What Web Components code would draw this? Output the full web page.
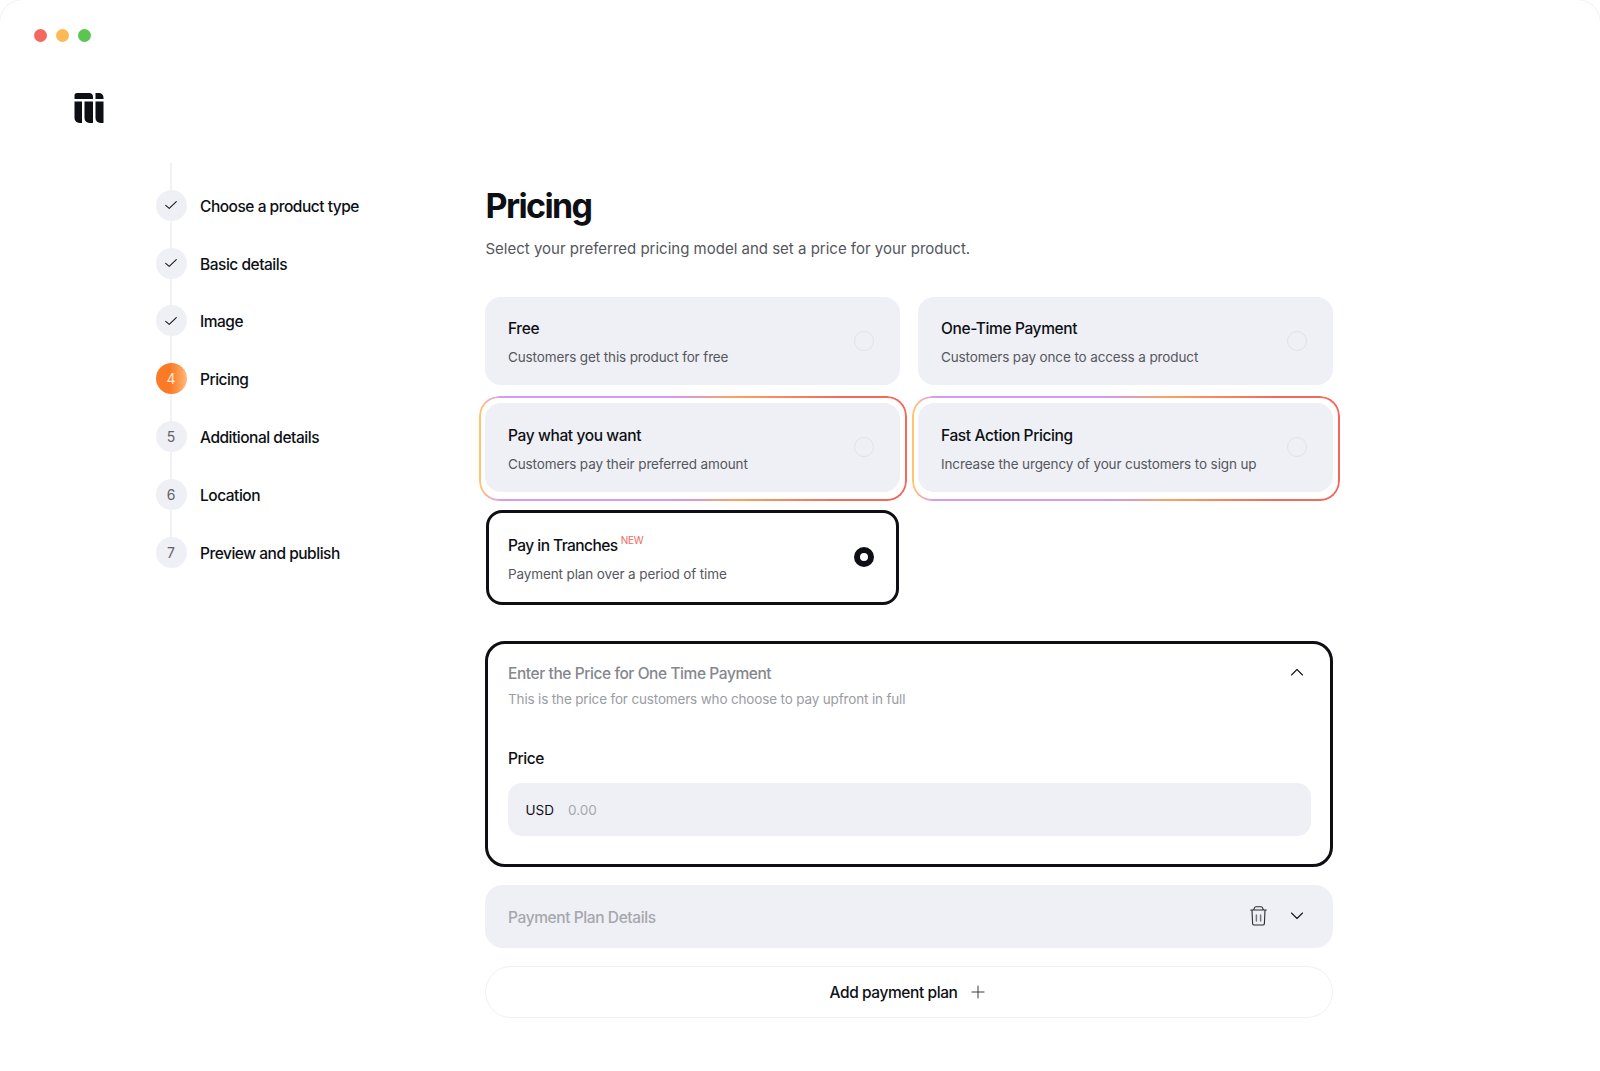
<!DOCTYPE html>
<html lang="en">
<head>
<meta charset="utf-8">
<title>Pricing</title>
<style>
  html, body { margin: 0; height: 100%; background: #fff; overflow: hidden; }
  body { font-family: Inter, "Noto Sans", sans-serif; color: #0d0f14; }
</style>
</head>
<body>
<app-window>
  <step-rail slot="rail">
    <step-item state="done" label="Choose a product type"></step-item>
    <step-item state="done" label="Basic details"></step-item>
    <step-item state="done" label="Image"></step-item>
    <step-item state="current" num="4" label="Pricing"></step-item>
    <step-item num="5" label="Additional details"></step-item>
    <step-item num="6" label="Location"></step-item>
    <step-item num="7" label="Preview and publish"></step-item>
  </step-rail>

  <pricing-page slot="main">
    <option-grid>
      <option-card title="Free" desc="Customers get this product for free"></option-card>
      <option-card title="One-Time Payment" desc="Customers pay once to access a product"></option-card>
      <option-card highlight title="Pay what you want" desc="Customers pay their preferred amount"></option-card>
      <option-card highlight title="Fast Action Pricing" desc="Increase the urgency of your customers to sign up"></option-card>
      <option-card selected badge="NEW" title="Pay in Tranches" desc="Payment plan over a period of time"></option-card>
    </option-grid>
    <price-panel></price-panel>
    <plan-row></plan-row>
    <add-plan></add-plan>
  </pricing-page>
</app-window>

<script>
// Window chrome: traffic lights, logo, and the two page columns
class AppWindow extends HTMLElement {
  constructor() {
    super();
    this.attachShadow({ mode: 'open' });
    this.shadowRoot.innerHTML = `
      <style>
        /* the straight edges of the frame sit just off the canvas, only the rounded corners show */
        :host { display: block; height: 1120px; box-sizing: border-box; margin: -1px -1px 0; border: 1px solid #f2f2f4; border-radius: 24px; padding: 28.5px 0 0 33.5px; }
        .lights { display: flex; gap: 9.2px; }
        .lights i { width: 13px; height: 13px; border-radius: 50%; }
        .logo { display: block; margin: 51.2px 0 0 40.5px; }
        .cols { display: flex; margin: 40.3px 0 0 122px; }
        .rail { width: 329.5px; flex: none; }
        .main { width: 848px; flex: none; }
      </style>
      <div class="lights">
        <i style="background:#f4695f"></i><i style="background:#fdb953"></i><i style="background:#5cc451"></i>
      </div>
      <svg class="logo" width="30" height="30" viewBox="0 0 30 30" fill="#0d0f14">
        <path d="M3 0H15A4 4 0 0 1 19 4V6H.5V2.5A2.5 2.5 0 0 1 3 0Z"/>
        <path d="M21.5 0H25A4.5 4.5 0 0 1 29.5 4.5V6H21.5Z"/>
        <path d="M.5 8.5H8V30H5.5A5 5 0 0 1 .5 25Z"/>
        <path d="M10.5 8.5H19V30H15.5A5 5 0 0 1 10.5 25Z"/>
        <path d="M21.5 8.5H29.5V30H26.5A5 5 0 0 1 21.5 25Z"/>
      </svg>
      <div class="cols">
        <div class="rail"><slot name="rail"></slot></div>
        <div class="main"><slot name="main"></slot></div>
      </div>
    `;
  }
}

// Vertical list of steps with the line running behind the circles
class StepRail extends HTMLElement {
  constructor() {
    super();
    this.attachShadow({ mode: 'open' });
    this.shadowRoot.innerHTML = `
      <style>
        :host { display: flex; flex-direction: column; gap: 26.8px; position: relative; padding-top: 26.8px; }
        .line { position: absolute; left: 14.5px; top: 0; bottom: 16px; width: 2px; background: #f1f2f6; }
      </style>
      <div class="line"></div>
      <slot></slot>
    `;
  }
}

// One step: circle with a check or number, then the label
class StepItem extends HTMLElement {
  constructor() {
    super();
    this.attachShadow({ mode: 'open' });
  }

  connectedCallback() {
    const state = this.getAttribute('state');
    const mark = state === 'done'
      ? `<svg width="14" height="14" viewBox="0 0 14 14" fill="none" stroke="#15171c" stroke-width="1.1" stroke-linecap="round" stroke-linejoin="round"><path d="M1.7 7.4 5.2 10.4 12.3 3.6"/></svg>`
      : this.getAttribute('num');
    this.shadowRoot.innerHTML = `
      <style>
        :host { display: flex; align-items: center; gap: 13.5px; position: relative; height: 31px; }
        .dot { width: 31px; height: 31px; border-radius: 50%; background: #eff0f5; color: #5f6268; font-size: 14px; display: flex; align-items: center; justify-content: center; flex: none; }
        .dot.current { background: linear-gradient(90deg, #fb7a26 0 45%, #fd9a4e 75%, #ffbb82 100%); color: rgba(255,255,255,.85); }
        .label { padding-top: 2px; font-size: 15.5px; font-weight: 500; letter-spacing: -0.48px; color: #0d0f14; }
      </style>
      <span class="dot ${state === 'current' ? 'current' : ''}">${mark}</span>
      <span class="label">${this.getAttribute('label')}</span>
    `;
  }
}

// Heading plus the stack of pricing sections
class PricingPage extends HTMLElement {
  constructor() {
    super();
    this.attachShadow({ mode: 'open' });
    this.shadowRoot.innerHTML = `
      <style>
        :host { display: block; padding-top: 22px; }
        h1 { margin: 0; font-size: 34px; line-height: 42px; font-weight: 700; letter-spacing: -1.6px; color: #0d0f14; padding-left: 0.5px; }
        p { margin: 12px 0 37.7px; padding-left: 0.5px; font-size: 15px; line-height: 20px; color: #54565c; }
      </style>
      <h1>Pricing</h1>
      <p>Select your preferred pricing model and set a price for your product.</p>
      <slot></slot>
    `;
  }
}

class OptionGrid extends HTMLElement {
  constructor() {
    super();
    this.attachShadow({ mode: 'open' });
    this.shadowRoot.innerHTML = `
      <style>
        :host { display: grid; grid-template-columns: 415px 415px; column-gap: 18px; row-gap: 18px; }
      </style>
      <slot></slot>
    `;
  }
}

// A pricing option: title, description, radio. Variants are highlight and selected
class OptionCard extends HTMLElement {
  constructor() {
    super();
    this.attachShadow({ mode: 'open' });
  }

  connectedCallback() {
    const badge = this.getAttribute('badge');
    this.shadowRoot.innerHTML = `
      <style>
        :host { display: flex; align-items: center; justify-content: space-between; position: relative; box-sizing: border-box; height: 88px; padding: 0 26px 0 23px; background: #eff0f5; border-radius: 16px; }
        :host([highlight]) { height: 89px; }
        :host([highlight])::before {
          content: ''; position: absolute; inset: -6.7px -6.5px -9px -6.5px; border: 2px solid transparent; border-radius: 20px;
          background: linear-gradient(90deg, #ffc766 0, #f5b0b5 2.5%, #cf9af8 6%, #cf9af8 45%, #ffa05e 60%, #f4695c 85%, #f4695c 100%) border-box;
          -webkit-mask: linear-gradient(#000 0 0) padding-box, linear-gradient(#000 0 0);
          -webkit-mask-composite: xor; mask-composite: exclude;
        }
        :host([selected]) { height: 95px; width: 413px; margin-left: 0.5px; background: #fff; border: 3px solid #0d0f14; padding: 0 21.5px 0 19.5px; }
        .text { display: flex; flex-direction: column; gap: 8.3px; padding-top: 5px; }
        :host([selected]) .text { padding-top: 5px; }
        .title { font-size: 15.5px; line-height: 20px; font-weight: 500; letter-spacing: -0.38px; color: #0d0f14; }
        :host([selected]) .title { letter-spacing: -0.55px; }
        .badge { font-size: 10px; font-weight: 400; letter-spacing: -0.15px; color: #f4695c; vertical-align: 7px; margin-left: 3px; line-height: 0; }
        .desc { font-size: 13.5px; line-height: 20px; letter-spacing: -0.12px; color: #55575d; }
        .radio { width: 20px; height: 20px; box-sizing: border-box; border-radius: 50%; border: 1px solid #e1e2e7; flex: none; }
        :host([selected]) .radio { border: 6px solid #0d0f14; background: #fff; }
      </style>
      <div class="text">
        <div class="title">${this.getAttribute('title')}${badge ? `<span class="badge">${badge}</span>` : ''}</div>
        <div class="desc">${this.getAttribute('desc')}</div>
      </div>
      <span class="radio"></span>
    `;
  }
}

// Open accordion with the price input
class PricePanel extends HTMLElement {
  constructor() {
    super();
    this.attachShadow({ mode: 'open' });
    this.shadowRoot.innerHTML = `
      <style>
        :host { display: block; box-sizing: border-box; height: 226px; margin-top: 36.3px; border: 3px solid #0d0f14; border-radius: 20px; padding: 18px 19px 0 20px; }
        .head { display: flex; justify-content: space-between; align-items: center; height: 22px; }
        .title { padding-top: 2px; font-size: 15.5px; font-weight: 500; letter-spacing: -0.42px; color: #85878d; }
        svg { margin: 0 7px 2px 0; }
        .sub { margin-top: 5px; font-size: 13.5px; line-height: 20px; letter-spacing: -0.16px; color: #9a9ca2; }
        .label { margin-top: 40px; font-size: 15.5px; line-height: 20px; font-weight: 500; letter-spacing: -0.42px; color: #0d0f14; }
        .input { display: flex; align-items: center; gap: 14px; margin-top: 14px; height: 53px; padding: 2px 17.5px 0; box-sizing: border-box; border-radius: 14px; background: #eff0f5; font-size: 13.5px; }
        .cur { color: #0d0f14; }
        .ph { color: #a6a8ad; }
      </style>
      <div class="head">
        <span class="title">Enter the Price for One Time Payment</span>
        <svg width="14" height="8" viewBox="0 0 14 8" fill="none" stroke="#15171c" stroke-width="1.1" stroke-linecap="round" stroke-linejoin="round"><path d="M1.5 7 7 1.5 12.5 7"/></svg>
      </div>
      <div class="sub">This is the price for customers who choose to pay upfront in full</div>
      <div class="label">Price</div>
      <div class="input"><span class="cur">USD</span><span class="ph">0.00</span></div>
    `;
  }
}

// Collapsed payment plan row with delete and expand icons
class PlanRow extends HTMLElement {
  constructor() {
    super();
    this.attachShadow({ mode: 'open' });
    this.shadowRoot.innerHTML = `
      <style>
        :host { display: flex; align-items: center; box-sizing: border-box; height: 62.7px; margin-top: 18px; padding: 0 29.5px 0 23px; background: #eff0f5; border-radius: 18px; }
        .title { flex: 1; padding-top: 2px; font-size: 15.5px; font-weight: 500; letter-spacing: -0.4px; color: #a5a7ad; }
        .trash { margin-right: 22.5px; }
      </style>
      <span class="title">Payment Plan Details</span>
      <svg class="trash" width="17" height="20" viewBox="0 0 17 20" fill="none" stroke="#2b2d33" stroke-width="1.1" stroke-linecap="round" stroke-linejoin="round">
        <path d="M.7 4H16.3M2 4 2.6 17.6A1.6 1.6 0 0 0 4.2 19H12.8A1.6 1.6 0 0 0 14.4 17.6L15 4M3.6 4 4.4 2A1.6 1.6 0 0 1 5.9 .8H11.1A1.6 1.6 0 0 1 12.6 2L13.4 4"/>
        <path d="M6.4 9V15M10.6 9V15" stroke="#74767c" stroke-width="1.5"/>
      </svg>
      <svg width="14" height="8" viewBox="0 0 14 8" fill="none" stroke="#15171c" stroke-width="1.1" stroke-linecap="round" stroke-linejoin="round"><path d="M1.5 1 7 6.5 12.5 1"/></svg>
    `;
  }
}

class AddPlan extends HTMLElement {
  constructor() {
    super();
    this.attachShadow({ mode: 'open' });
    this.shadowRoot.innerHTML = `
      <style>
        :host { display: flex; align-items: center; justify-content: center; gap: 14px; box-sizing: border-box; height: 52.3px; margin-top: 18px; padding-right: 3px; border: 1px solid #f0f1f6; border-radius: 27px; }
        span { padding-top: 2px; font-size: 15.5px; font-weight: 500; letter-spacing: -0.42px; color: #0d0f14; }
      </style>
      <span>Add payment plan</span>
      <svg width="14" height="14" viewBox="0 0 14 14" fill="none" stroke="#3a3c42" stroke-width="1" stroke-linecap="round"><path d="M7 1V13M1 7H13"/></svg>
    `;
  }
}

customElements.define('app-window', AppWindow);
customElements.define('step-rail', StepRail);
customElements.define('step-item', StepItem);
customElements.define('pricing-page', PricingPage);
customElements.define('option-grid', OptionGrid);
customElements.define('option-card', OptionCard);
customElements.define('price-panel', PricePanel);
customElements.define('plan-row', PlanRow);
customElements.define('add-plan', AddPlan);
</script>
</body>
</html>
